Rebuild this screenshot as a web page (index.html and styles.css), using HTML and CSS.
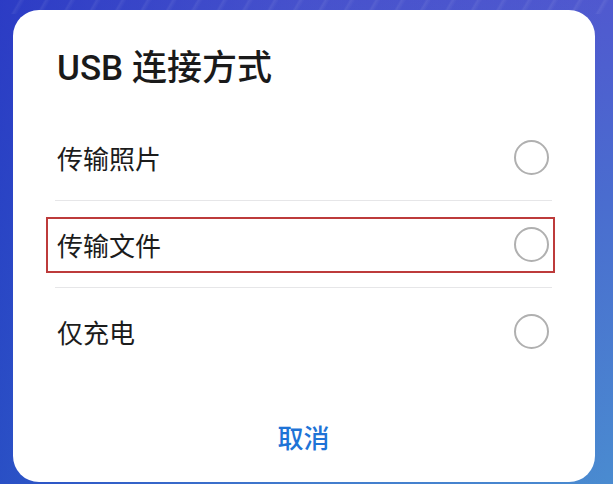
FILE: index.html
```html
<!DOCTYPE html>
<html lang="zh-CN">
<head>
<meta charset="utf-8">
<title>USB 连接方式</title>
<link rel="stylesheet" href="styles.css">
</head>
<body>
  <div class="dialog">
    <h1 class="title">USB 连接方式</h1>
    <ul class="options">
      <li class="option">
        <span class="label">传输照片</span>
        <span class="radio"></span>
      </li>
      <li class="option option-marked">
        <span class="label">传输文件</span>
        <span class="radio"></span>
        <span class="mark"></span>
      </li>
      <li class="option">
        <span class="label">仅充电</span>
        <span class="radio"></span>
      </li>
    </ul>
    <div class="actions">
      <button class="cancel" type="button">取消</button>
    </div>
  </div>
</body>
</html>
```

FILE: styles.css
```css
html, body {
  margin: 0;
  padding: 0;
  height: 100%;
}

body {
  width: 613px;
  height: 484px;
  overflow: hidden;
  font-family: Roboto, "Noto Sans CJK SC", sans-serif;
  background:
    repeating-linear-gradient(120deg, rgba(255,255,255,0) 0px, rgba(255,255,255,0) 16px, rgba(255,255,255,0.07) 18px, rgba(255,255,255,0) 22px) top / 100% 14px no-repeat,
    linear-gradient(to right, rgba(20, 40, 190, 0.6) 0%, rgba(20, 40, 190, 0.15) 50%, rgba(20, 40, 190, 0) 100%),
    linear-gradient(to bottom, #5059cf 0%, #4a6ccf 40%, #4a8bd0 100%);
  display: flex;
  flex-direction: column;
  box-sizing: border-box;
  padding: 10px 18px 2px 13px;
}

.dialog {
  flex: 1;
  background: #ffffff;
  border-radius: 26px;
  padding: 0 43px 0 42px;
  display: flex;
  flex-direction: column;
}

.title {
  margin: 0;
  height: 104px;
  box-sizing: border-box;
  padding: 4px 0 0 2px;
  display: flex;
  align-items: center;
  font-size: 35px;
  font-weight: 500;
  color: #1a1a1a;
}

.options {
  list-style: none;
  margin: 0;
  padding: 0;
}

.option {
  position: relative;
  height: 86px;
  display: flex;
  align-items: center;
  justify-content: space-between;
}

.option + .option {
  border-top: 1px solid #e6e6e8;
}

.label {
  padding-left: 2px;
  font-size: 26px;
  color: #1c1c1c;
}

.radio {
  width: 35px;
  height: 35px;
  box-sizing: border-box;
  border: 2px solid #b0b0b0;
  border-radius: 50%;
  margin-right: 3px;
}

.mark {
  position: absolute;
  left: -9px;
  right: -3px;
  top: 16px;
  height: 56px;
  box-sizing: border-box;
  border: 2px solid #bd3b3b;
}

.actions {
  flex: 1;
  display: flex;
  justify-content: center;
  align-items: flex-start;
  padding-top: 47px;
}

.cancel {
  border: 0;
  background: none;
  padding: 0 8px;
  font-family: Roboto, "Noto Sans CJK SC", sans-serif;
  font-size: 26px;
  line-height: 36px;
  font-weight: 500;
  color: #1e73d6;
}
```
